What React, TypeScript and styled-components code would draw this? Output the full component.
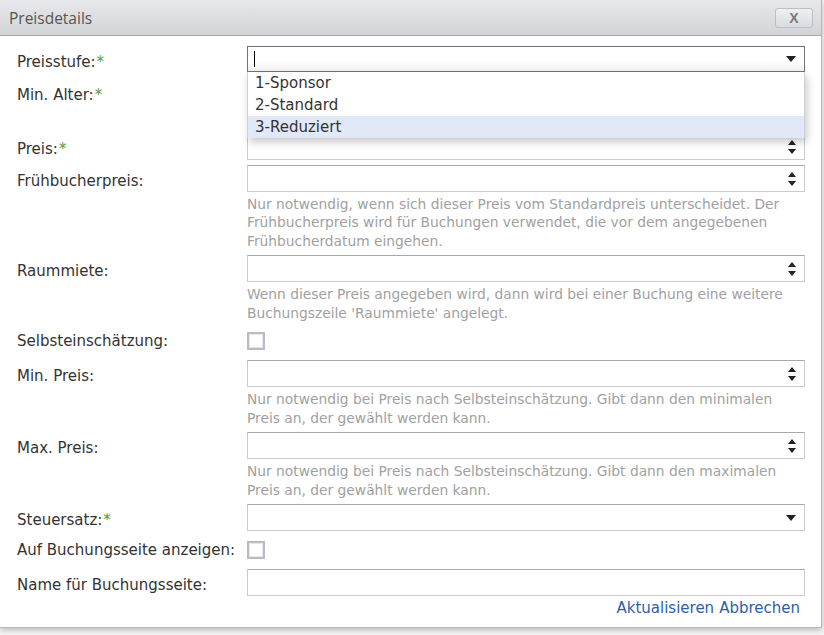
import React from "react";
import styled, { createGlobalStyle } from "styled-components";

const GlobalStyle = createGlobalStyle`
  html, body { margin: 0; padding: 0; }
  body {
    background: #f3f3f3;
    font-family: "DejaVu Sans", Verdana, sans-serif;
    width: 824px;
    height: 635px;
    overflow: hidden;
  }
`;

const Page = styled.div`
  width: 824px;
  height: 635px;
  background: #f5f5f5;
`;

const Dialog = styled.div`
  width: 821px;
  height: 627px;
  background: #fff;
  border-right: 1px solid #b4b7bd;
  border-bottom: 1px solid #b4b7bd;
  box-shadow: 0 2px 6px rgba(0, 0, 0, 0.25);
  display: flex;
  flex-direction: column;
`;

const TitleBar = styled.div`
  height: 35px;
  flex: none;
  display: flex;
  align-items: center;
  justify-content: space-between;
  padding: 0 8px 0 9px;
  background: linear-gradient(#e7e8eb, #d2d4d8);
  border-bottom: 1px solid #a7aab0;
`;

const Title = styled.span`
  font-family: "Open Sans", "Liberation Sans", sans-serif;
  font-size: 15.5px;
  color: #555;
`;

const CloseButton = styled.button`
  width: 38px;
  height: 20px;
  padding: 0;
  border: 1px solid #bcbfc5;
  border-radius: 3px;
  background: linear-gradient(#eff0f2, #d9dbdf);
  color: #777a7e;
  font-family: "Liberation Sans", Arial, sans-serif;
  font-weight: bold;
  font-size: 14px;
  line-height: 18px;
`;

const Body = styled.div`
  flex: 1;
  display: flex;
  flex-direction: column;
  gap: 5px;
  padding: 10px 16px 0 17px;
`;

const Row = styled.div<{ $after?: number }>`
  display: grid;
  grid-template-columns: 230px 558px;
  align-items: start;
  margin-bottom: ${(p) => p.$after ?? 0}px;
`;

const Label = styled.div<{ $h?: number }>`
  font-size: 15px;
  color: #333;
  line-height: 18px;
  padding-top: ${(p) => p.$h ?? 7}px;
  white-space: nowrap;
`;

const Req = styled.span`
  color: #4e9a3e;
  margin-left: 1px;
`;

const Field = styled.div`
  position: relative;
  display: flex;
  flex-direction: column;
`;

const InputBox = styled.div<{ $focus?: boolean; $h?: number }>`
  box-sizing: border-box;
  height: ${(p) => p.$h ?? 27}px;
  border: 1px solid ${(p) => (p.$focus ? "#70747f" : "#c9cbd0")};
  border-top-color: ${(p) => (p.$focus ? "#6a6e79" : "#a7a9ae")};
  background: ${(p) => (p.$focus ? "linear-gradient(#fff 60%, #f2f2f2)" : "#fff")};
  display: flex;
  align-items: center;
  justify-content: space-between;
  padding: 0 8px 0 6px;
`;

const Caret = styled.span`
  width: 1px;
  height: 16px;
  background: #000;
`;

const Spinner = styled.div`
  display: flex;
  flex-direction: column;
  gap: 4px;
  margin-top: 1px;
`;

const Hint = styled.div`
  font-size: 13.8px;
  color: #a1a1a1;
  line-height: 18.5px;
  margin-top: 3px;
  padding-right: 10px;
`;

const Check = styled.div`
  box-sizing: border-box;
  width: 18px;
  height: 18px;
  border: 2px solid #b9bcc4;
  background: #fff;
  box-shadow: inset 0 0 0 1px #e6e7ea;
`;

const CheckCell = styled.div<{ $h: number }>`
  height: ${(p) => p.$h}px;
  display: flex;
  align-items: center;
`;

const Dropdown = styled.div`
  position: absolute;
  top: 26px;
  left: 0;
  right: 0;
  background: #fff;
  border-left: 1px solid #d0d2d6;
  border-right: 1px solid #d0d2d6;
  box-shadow: 2px 4px 8px rgba(0, 0, 0, 0.22);
  z-index: 2;
`;

const Option = styled.div<{ $active?: boolean }>`
  height: 22px;
  line-height: 22px;
  font-size: 15px;
  color: #333;
  padding-left: 7px;
  background: ${(p) => (p.$active ? "#e1e9f9" : "#fff")};
`;

const Footer = styled.div`
  display: flex;
  justify-content: flex-end;
  gap: 5px;
  margin-top: -2px;
  padding-right: 5px;
`;

const Link = styled.a`
  font-size: 15px;
  color: #2e5ea9;
  text-decoration: none;
`;

const Tri = ({ up }: { up?: boolean }) => (
  <svg width="8" height="5" viewBox="0 0 8 5">
    <path d={up ? "M0 5 L4 0 L8 5 Z" : "M0 0 L8 0 L4 5 Z"} fill="#222" />
  </svg>
);

const ArrowDown = () => (
  <svg width="10" height="6" viewBox="0 0 10 6">
    <path d="M0 0 L10 0 L5 6 Z" fill="#222" />
  </svg>
);

const NumberInput = () => (
  <InputBox>
    <span />
    <Spinner>
      <Tri up />
      <Tri />
    </Spinner>
  </InputBox>
);

const SelectInput = ({ focus }: { focus?: boolean }) => (
  <InputBox $focus={focus} $h={focus ? 26 : 27}>
    {focus ? <Caret /> : <span />}
    <ArrowDown />
  </InputBox>
);

export default function App() {
  return (
    <Page>
      <GlobalStyle />
      <Dialog>
        <TitleBar>
          <Title>Preisdetails</Title>
          <CloseButton>X</CloseButton>
        </TitleBar>
        <Body>
          <Row $after={2}>
            <Label $h={7}>
              Preisstufe:<Req>*</Req>
            </Label>
            <Field>
              <SelectInput focus />
              <Dropdown>
                <Option>1-Sponsor</Option>
                <Option>2-Standard</Option>
                <Option $active>3-Reduziert</Option>
              </Dropdown>
            </Field>
          </Row>
          <Row>
            <Label>
              Min. Alter:<Req>*</Req>
            </Label>
            <Field>
              <NumberInput />
              <Hint>&nbsp;</Hint>
            </Field>
          </Row>
          <Row>
            <Label>
              Preis:<Req>*</Req>
            </Label>
            <Field>
              <NumberInput />
            </Field>
          </Row>
          <Row>
            <Label>Frühbucherpreis:</Label>
            <Field>
              <NumberInput />
              <Hint>
                Nur notwendig, wenn sich dieser Preis vom Standardpreis unterscheidet. Der
                Frühbucherpreis wird für Buchungen verwendet, die vor dem angegebenen
                Frühbucherdatum eingehen.
              </Hint>
            </Field>
          </Row>
          <Row>
            <Label>Raummiete:</Label>
            <Field>
              <NumberInput />
              <Hint>
                Wenn dieser Preis angegeben wird, dann wird bei einer Buchung eine weitere
                Buchungszeile 'Raummiete' angelegt.
              </Hint>
            </Field>
          </Row>
          <Row>
            <Label $h={5}>Selbsteinschätzung:</Label>
            <CheckCell $h={28}>
              <Check />
            </CheckCell>
          </Row>
          <Row>
            <Label>Min. Preis:</Label>
            <Field>
              <NumberInput />
              <Hint>
                Nur notwendig bei Preis nach Selbsteinschätzung. Gibt dann den minimalen
                Preis an, der gewählt werden kann.
              </Hint>
            </Field>
          </Row>
          <Row>
            <Label>Max. Preis:</Label>
            <Field>
              <NumberInput />
              <Hint>
                Nur notwendig bei Preis nach Selbsteinschätzung. Gibt dann den maximalen
                Preis an, der gewählt werden kann.
              </Hint>
            </Field>
          </Row>
          <Row>
            <Label>
              Steuersatz:<Req>*</Req>
            </Label>
            <Field>
              <SelectInput />
            </Field>
          </Row>
          <Row>
            <Label $h={5}>Auf Buchungsseite anzeigen:</Label>
            <CheckCell $h={28}>
              <Check />
            </CheckCell>
          </Row>
          <Row>
            <Label>Name für Buchungsseite:</Label>
            <Field>
              <InputBox />
            </Field>
          </Row>
          <Footer>
            <Link href="#">Aktualisieren</Link>
            <Link href="#">Abbrechen</Link>
          </Footer>
        </Body>
      </Dialog>
    </Page>
  );
}
